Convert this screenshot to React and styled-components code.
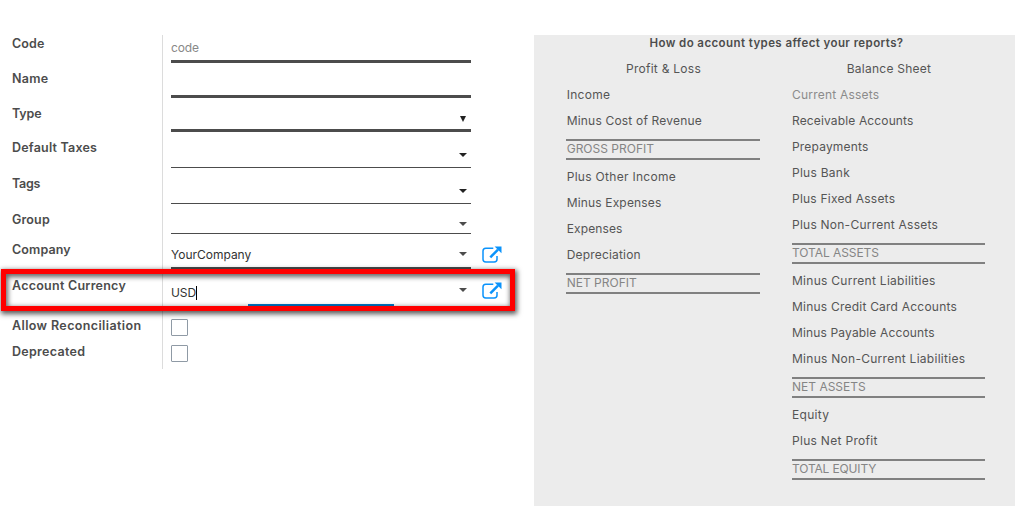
import React from 'react';
import styled, { createGlobalStyle } from 'styled-components';

const GlobalStyle = createGlobalStyle`
  * { box-sizing: border-box; }
  body {
    margin: 0;
    background: #fff;
    color: #4c4c4c;
    font: 12px/16px Inter, "Liberation Sans", sans-serif;
    overflow: hidden;
  }
`;

const Page = styled.main`
  display: flex;
  align-items: stretch;
  width: 1015px;
  height: 506px;
  padding-top: 35px;
`;

const Form = styled.form`
  position: relative;
  width: 534px;
  flex: none;
`;

const FormRow = styled.div`
  display: flex;
  height: ${(p) => p.$height}px;
`;

const Label = styled.label`
  width: 163px;
  flex: none;
  padding: 1px 0 0 12px;
  border-right: 1px solid #dcdcdc;
  font-size: 12.5px;
  font-weight: 600;
  letter-spacing: ${(p) => p.$spacing}px;
  white-space: nowrap;
`;

const Field = styled.div`
  position: relative;
  display: flex;
  align-items: flex-start;
  width: 300px;
  height: ${(p) => p.$height}px;
  margin-left: 8px;
  border-bottom: ${(p) => p.$line}px solid #4c4c4c;
`;

const Value = styled.span`
  display: flex;
  padding-top: ${(p) => p.$top}px;
  color: ${(p) => (p.$muted ? '#888' : '#333')};
  letter-spacing: ${(p) => p.$spacing}px;
`;

const TextCursor = styled.i`
  width: 1px;
  height: 14px;
  margin-top: 1px;
  background: #000;
`;

const Caret = styled.i`
  width: 0;
  height: 0;
  margin: ${(p) => p.$top}px ${(p) => (p.$tall ? 5 : 4)}px 0 auto;
  border: solid transparent;
  border-width: ${(p) => (p.$tall ? '6px 3px 0' : '4px 4px 0')};
  border-top-color: ${(p) => p.$color || '#4c4c4c'};
`;

const FocusLine = styled.i`
  position: absolute;
  left: 77px;
  bottom: 0;
  width: 146px;
  height: 2px;
  background: #0078c8;
`;

const LinkButton = styled.button`
  width: 20px;
  height: 18px;
  margin: 5px 0 0 11px;
  padding: 0;
  border: 0;
  background: none;

  svg { display: block; }
`;

const Checkbox = styled.span`
  width: 17px;
  height: 17px;
  margin: 2px 0 0 8px;
  border: 1px solid #8f9aa5;
  border-radius: 1px;
  background: #fff;
`;

const Highlight = styled.div`
  position: absolute;
  left: 1px;
  top: 233.5px;
  width: 514px;
  height: 42.5px;
  border: 5px solid #f00;
  box-shadow: 1px 2px 5px 1px rgba(0, 0, 0, 0.65), inset 1px 2px 5px 1px rgba(0, 0, 0, 0.6);
  pointer-events: none;
`;

const Panel = styled.section`
  flex: 1;
  background: #ececec;
`;

const PanelTitle = styled.h2`
  height: 21px;
  margin: 0;
  padding-left: 4px;
  font-size: 11.5px;
  line-height: 17px;
  font-weight: 600;
  letter-spacing: 0.41px;
  text-align: center;
`;

const Columns = styled.div`
  display: grid;
  grid-template-columns: 194px 193px;
  column-gap: 32px;
  padding-left: 32px;
`;

const Item = styled.div`
  height: 26px;
  padding-left: ${(p) => (p.$heading ? 1 : p.$indent)}px;
  line-height: 26px;
  letter-spacing: ${(p) => p.$spacing}px;
  text-align: ${(p) => (p.$heading ? 'center' : 'left')};
  color: ${(p) => (p.$muted ? '#8b8b8b' : '#555')};
  white-space: nowrap;
`;

const Total = styled.div`
  height: 21px;
  margin: 5px 0 4px;
  padding-left: ${(p) => p.$indent}px;
  border: solid #808080;
  border-width: 2px 0;
  line-height: 16px;
  letter-spacing: ${(p) => p.$spacing}px;
  color: #858585;
`;

const ExternalLink = () => (
  <LinkButton type="button" aria-label="Open record">
    <svg width="20" height="18" viewBox="0 0 20 18" fill="none">
      <path d="M11.3 2.2H3.8Q1 2.2 1 5V13.3Q1 16 3.8 16H12.2Q15 16 15 13.3V10" stroke="#0b93fb" strokeWidth="1.5" />
      <path d="M8.3 11.3L16 3.6" stroke="#0b93fb" strokeWidth="2.5" />
      <path d="M12.6 0.5H19.5V7.3Z" fill="#0b93fb" />
    </svg>
  </LinkButton>
);

const profit = [
  ['Income', 0.28], ['Minus Cost of Revenue', 0.19], ['GROSS PROFIT', 0, 'total'],
  ['Plus Other Income', 0.3], ['Minus Expenses', 0.16], ['Expenses', 0.12],
  ['Depreciation', 0.18], ['NET PROFIT', 0, 'total'],
];

const balance = [
  ['Current Assets', 0.21, 'muted'], ['Receivable Accounts', 0.14], ['Prepayments', 0.18],
  ['Plus Bank', 0.26], ['Plus Fixed Assets', 0.22], ['Plus Non-Current Assets', 0.24],
  ['TOTAL ASSETS', -0.07, 'total'], ['Minus Current Liabilities', 0.28],
  ['Minus Credit Card Accounts', 0.22], ['Minus Payable Accounts', 0.15],
  ['Minus Non-Current Liabilities', 0.27], ['NET ASSETS', 0, 'total'],
  ['Equity', 0.3], ['Plus Net Profit', 0.3], ['TOTAL EQUITY', -0.15, 'total'],
];

const ReportColumn = ({ heading, spacing, items, indent }) => (
  <div>
    <Item $heading $spacing={spacing}>{heading}</Item>
    {items.map(([text, gap, kind]) =>
      kind === 'total'
        ? <Total key={text} $indent={indent} $spacing={gap}>{text}</Total>
        : <Item key={text} $indent={indent} $spacing={gap} $muted={kind === 'muted'}>{text}</Item>
    )}
  </div>
);

export default function App() {
  return (
    <>
      <GlobalStyle />
      <Page>
        <Form>
          <FormRow $height={35}>
            <Label $spacing={0.13}>Code</Label>
            <Field $height={28} $line={3}><Value $muted $top={5} $spacing={-0.1}>code</Value></Field>
          </FormRow>
          <FormRow $height={35}>
            <Label $spacing={0.3}>Name</Label>
            <Field $height={28} $line={3} />
          </FormRow>
          <FormRow $height={34}>
            <Label $spacing={-0.15}>Type</Label>
            <Field $height={27} $line={3}><Caret $tall $top={11} $color="#222" /></Field>
          </FormRow>
          <FormRow $height={36}>
            <Label $spacing={0.2}>Default Taxes</Label>
            <Field $height={29} $line={1}><Caret $top={14} $color="#222" /></Field>
          </FormRow>
          <FormRow $height={36}>
            <Label $spacing={-0.3}>Tags</Label>
            <Field $height={29} $line={1}><Caret $top={14} $color="#222" /></Field>
          </FormRow>
          <FormRow $height={30}>
            <Label $spacing={0.15}>Group</Label>
            <Field $height={23} $line={1}><Caret $top={11} /></Field>
          </FormRow>
          <FormRow $height={36}>
            <Label $spacing={0.1}>Company</Label>
            <Field $height={28} $line={2}>
              <Value $top={6} $spacing={-0.01}>YourCompany</Value>
              <Caret $top={11} />
            </Field>
            <ExternalLink />
          </FormRow>
          <FormRow $height={40}>
            <Label $spacing={0.25}>Account Currency</Label>
            <Field $height={29} $line={0}>
              <Value $top={8} $spacing={-0.1}>USD<TextCursor /></Value>
              <Caret $top={11} />
              <FocusLine />
            </Field>
            <ExternalLink />
          </FormRow>
          <FormRow $height={26}>
            <Label $spacing={0.38}>Allow Reconciliation</Label>
            <Checkbox />
          </FormRow>
          <FormRow $height={26}>
            <Label $spacing={0.3}>Deprecated</Label>
            <Checkbox />
          </FormRow>
          <Highlight />
        </Form>
        <Panel>
          <PanelTitle>How do account types affect your reports?</PanelTitle>
          <Columns>
            <ReportColumn heading="Profit & Loss" spacing={0.26} items={profit} indent={0.7} />
            <ReportColumn heading="Balance Sheet" spacing={0.25} items={balance} indent={0} />
          </Columns>
        </Panel>
      </Page>
    </>
  );
}
